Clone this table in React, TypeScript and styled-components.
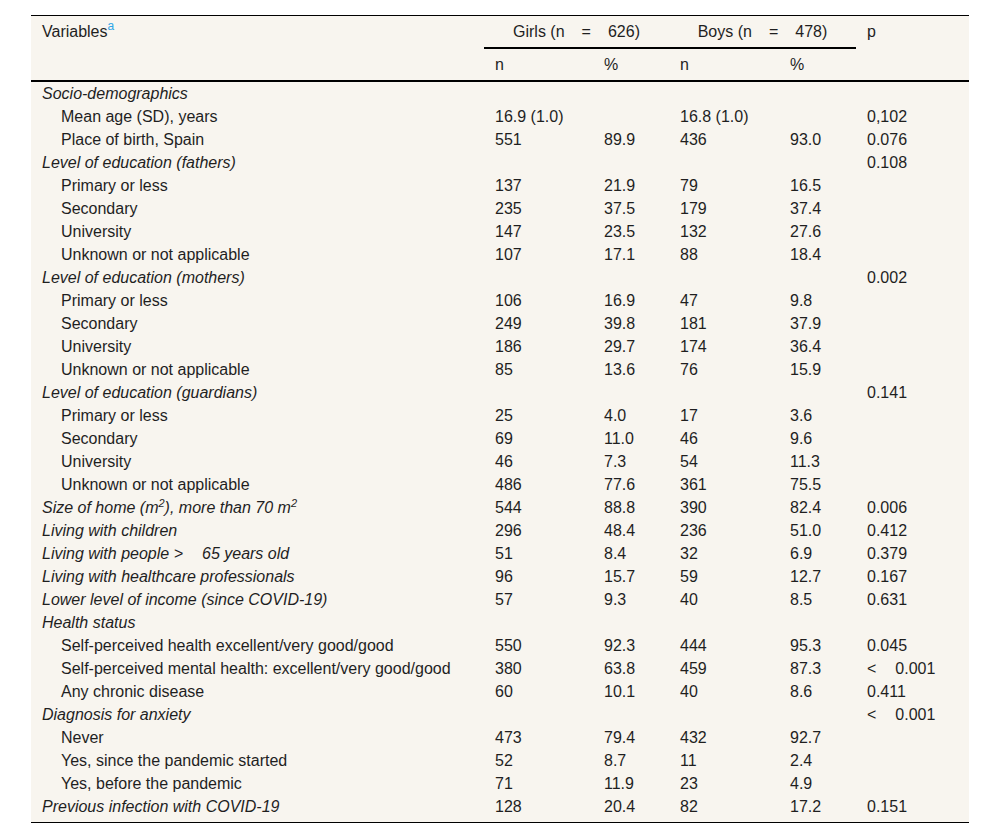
import * as React from "react";
import styled, { createGlobalStyle } from "styled-components";

type Row = {
	label: React.ReactNode;
	sub?: boolean;
	gn?: string;
	gp?: string;
	bn?: string;
	bp?: string;
	p?: React.ReactNode;
};

const GlobalStyle = createGlobalStyle`
	html, body {
		margin: 0;
		padding: 0;
		background: #fff;
	}
	body {
		font-family: "Liberation Sans", Arial, sans-serif;
		color: #1f1f1f;
	}
`;

const Page = styled.div`
	display: flex;
	justify-content: center;
	padding-top: 15px;
`;

const Table = styled.table`
	width: 938px;
	table-layout: fixed;
	border-collapse: separate;
	border-spacing: 0;
	background: #f8f5ef;
	border-top: 1px solid #000;
	border-bottom: 1px solid #000;
	font-size: 16px;
`;

const HeadCell = styled.th<{ $top?: boolean; $rule?: boolean; $center?: boolean }>`
	font-weight: normal;
	text-align: ${(p) => (p.$center ? "center" : "left")};
	vertical-align: ${(p) => (p.$top ? "top" : "middle")};
	padding: 6px 11px;
	line-height: 19px;
	border-bottom: 2px solid ${(p) => (p.$rule ? "#000" : "transparent")};
	white-space: nowrap;
`;

const Cell = styled.td<{ $italic?: boolean; $sub?: boolean; $last?: boolean }>`
	padding: 0 11px ${(p) => (p.$last ? "4px" : "0")}
		${(p) => (p.$sub ? "30px" : "11px")};
	line-height: 23px;
	font-style: ${(p) => (p.$italic ? "italic" : "normal")};
	white-space: nowrap;
	vertical-align: top;
`;

const Note = styled.sup`
	color: #2ea6e8;
	font-size: 12px;
	line-height: 0;
	vertical-align: 7px;
`;

const Sq = styled.sup`
	font-size: 11px;
	line-height: 0;
	vertical-align: 6px;
`;

const Eq = styled.span`
	padding: 0 17px;
`;

const Gap = styled.span`
	display: inline-block;
	width: 19px;
`;

const sq = <Sq>2</Sq>;

const rows: Row[] = [
	{ label: "Socio-demographics" },
	{ label: "Mean age (SD), years", sub: true, gn: "16.9 (1.0)", bn: "16.8 (1.0)", p: "0,102" },
	{ label: "Place of birth, Spain", sub: true, gn: "551", gp: "89.9", bn: "436", bp: "93.0", p: "0.076" },
	{ label: "Level of education (fathers)", p: "0.108" },
	{ label: "Primary or less", sub: true, gn: "137", gp: "21.9", bn: "79", bp: "16.5" },
	{ label: "Secondary", sub: true, gn: "235", gp: "37.5", bn: "179", bp: "37.4" },
	{ label: "University", sub: true, gn: "147", gp: "23.5", bn: "132", bp: "27.6" },
	{ label: "Unknown or not applicable", sub: true, gn: "107", gp: "17.1", bn: "88", bp: "18.4" },
	{ label: "Level of education (mothers)", p: "0.002" },
	{ label: "Primary or less", sub: true, gn: "106", gp: "16.9", bn: "47", bp: "9.8" },
	{ label: "Secondary", sub: true, gn: "249", gp: "39.8", bn: "181", bp: "37.9" },
	{ label: "University", sub: true, gn: "186", gp: "29.7", bn: "174", bp: "36.4" },
	{ label: "Unknown or not applicable", sub: true, gn: "85", gp: "13.6", bn: "76", bp: "15.9" },
	{ label: "Level of education (guardians)", p: "0.141" },
	{ label: "Primary or less", sub: true, gn: "25", gp: "4.0", bn: "17", bp: "3.6" },
	{ label: "Secondary", sub: true, gn: "69", gp: "11.0", bn: "46", bp: "9.6" },
	{ label: "University", sub: true, gn: "46", gp: "7.3", bn: "54", bp: "11.3" },
	{ label: "Unknown or not applicable", sub: true, gn: "486", gp: "77.6", bn: "361", bp: "75.5" },
	{
		label: (
			<>
				Size of home (m{sq}), more than 70 m{sq}
			</>
		),
		gn: "544",
		gp: "88.8",
		bn: "390",
		bp: "82.4",
		p: "0.006",
	},
	{ label: "Living with children", gn: "296", gp: "48.4", bn: "236", bp: "51.0", p: "0.412" },
	{
		label: (
			<>
				Living with people &gt;<Gap />65 years old
			</>
		),
		gn: "51",
		gp: "8.4",
		bn: "32",
		bp: "6.9",
		p: "0.379",
	},
	{ label: "Living with healthcare professionals", gn: "96", gp: "15.7", bn: "59", bp: "12.7", p: "0.167" },
	{ label: "Lower level of income (since COVID-19)", gn: "57", gp: "9.3", bn: "40", bp: "8.5", p: "0.631" },
	{ label: "Health status" },
	{ label: "Self-perceived health excellent/very good/good", sub: true, gn: "550", gp: "92.3", bn: "444", bp: "95.3", p: "0.045" },
	{
		label: "Self-perceived mental health: excellent/very good/good",
		sub: true,
		gn: "380",
		gp: "63.8",
		bn: "459",
		bp: "87.3",
		p: (
			<>
				&lt;<Gap />0.001
			</>
		),
	},
	{ label: "Any chronic disease", sub: true, gn: "60", gp: "10.1", bn: "40", bp: "8.6", p: "0.411" },
	{
		label: "Diagnosis for anxiety",
		p: (
			<>
				&lt;<Gap />0.001
			</>
		),
	},
	{ label: "Never", sub: true, gn: "473", gp: "79.4", bn: "432", bp: "92.7" },
	{ label: "Yes, since the pandemic started", sub: true, gn: "52", gp: "8.7", bn: "11", bp: "2.4" },
	{ label: "Yes, before the pandemic", sub: true, gn: "71", gp: "11.9", bn: "23", bp: "4.9" },
	{ label: "Previous infection with COVID-19", gn: "128", gp: "20.4", bn: "82", bp: "17.2", p: "0.151" },
];

const widths = [453, 109, 76, 110, 77, 113];

export default function App() {
	return (
		<>
			<GlobalStyle />
			<Page>
				<Table>
					<colgroup>
						{widths.map((w, i) => (
							<col key={i} style={{ width: w }} />
						))}
					</colgroup>
					<thead>
						<tr>
							<HeadCell rowSpan={2} $top $rule>
								Variables<Note>a</Note>
							</HeadCell>
							<HeadCell colSpan={2} $center $rule>
								Girls (n<Eq>=</Eq>626)
							</HeadCell>
							<HeadCell colSpan={2} $center $rule>
								Boys (n<Eq>=</Eq>478)
							</HeadCell>
							<HeadCell rowSpan={2} $top $rule>
								p
							</HeadCell>
						</tr>
						<tr>
							<HeadCell $rule>n</HeadCell>
							<HeadCell $rule>%</HeadCell>
							<HeadCell $rule>n</HeadCell>
							<HeadCell $rule>%</HeadCell>
						</tr>
					</thead>
					<tbody>
						{rows.map((r, i) => {
							const last = i === rows.length - 1;
							return (
								<tr key={i}>
									<Cell $italic={!r.sub} $sub={r.sub} $last={last}>
										{r.label}
									</Cell>
									<Cell $last={last}>{r.gn}</Cell>
									<Cell $last={last}>{r.gp}</Cell>
									<Cell $last={last}>{r.bn}</Cell>
									<Cell $last={last}>{r.bp}</Cell>
									<Cell $last={last}>{r.p}</Cell>
								</tr>
							);
						})}
					</tbody>
				</Table>
			</Page>
		</>
	);
}
